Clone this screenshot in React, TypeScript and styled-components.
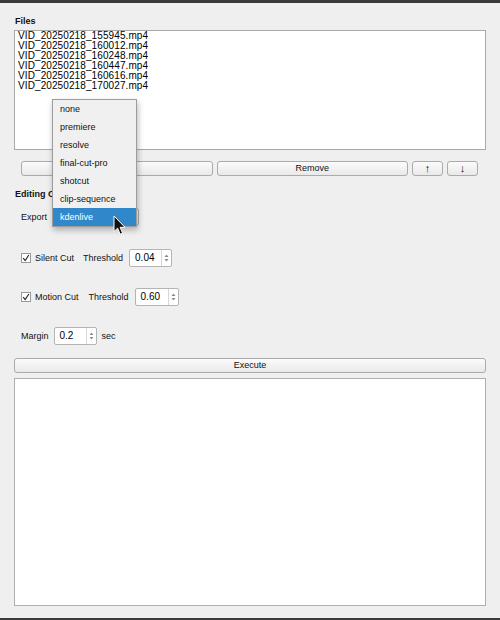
import React from "react";
import styled, { createGlobalStyle } from "styled-components";

const Global = createGlobalStyle`
  html, body { margin: 0; padding: 0; background: #efefef; }
  body { font-family: "Liberation Sans", Arial, sans-serif; font-size: 9px; color: #111; }
`;

const Window = styled.div`
  position: relative;
  width: 500px;
  height: 620px;
  display: flex;
  flex-direction: column;
  background: #efefef;
  overflow: hidden;
`;

const Frame = styled.div<{ $h: number }>`
  height: ${(p) => p.$h}px;
  background: #3b3b3b;
  flex: none;
`;

const Body = styled.div`
  flex: 1;
  display: flex;
  flex-direction: column;
  padding: 11px 14px 0 14px;
`;

const GroupTitle = styled.div<{ $mt?: number }>`
  height: 13px;
  line-height: 14px;
  font-weight: bold;
  padding-left: 1px;
  margin-top: ${(p) => p.$mt ?? 0}px;
`;

const FileList = styled.div`
  margin-top: 3px;
  height: 120px;
  box-sizing: border-box;
  border: 1px solid #a9a9a9;
  background: #fff;
  padding: 0 3px;
  font-size: 10px;
  line-height: 10px;
  letter-spacing: 0.1px;
  color: #000;
`;

const FileItem = styled.div`
  height: 10px;
  white-space: nowrap;
`;

const ButtonRow = styled.div`
  margin-top: 11px;
  padding: 0 8px 0 7px;
  display: flex;
  gap: 4px;
`;

const Button = styled.button<{ $w?: number; $grow?: boolean; $big?: boolean }>`
  height: 15px;
  padding: 0;
  margin: 0;
  box-sizing: border-box;
  border: 1px solid #ababab;
  border-radius: 3px;
  background: linear-gradient(#fbfbfb, #e9e9e9);
  font-family: "Liberation Sans", Arial, sans-serif;
  font-size: ${(p) => (p.$big ? 11 : 9)}px;
  line-height: 13px;
  color: #111;
  flex: ${(p) => (p.$grow ? "1 1 0" : "none")};
  width: ${(p) => (p.$w ? `${p.$w}px` : "auto")};
`;

const Row = styled.div<{ $mt: number }>`
  margin-top: ${(p) => p.$mt}px;
  height: 18px;
  display: flex;
  align-items: center;
  padding-left: 7px;
`;

const Label = styled.span<{ $ml?: number; $mr?: number }>`
  margin-left: ${(p) => p.$ml ?? 0}px;
  margin-right: ${(p) => p.$mr ?? 0}px;
  white-space: nowrap;
`;

const Check = styled.span`
  width: 10px;
  height: 10px;
  box-sizing: border-box;
  border: 1px solid #9a9a9a;
  background: #fff;
  display: inline-flex;
  align-items: center;
  justify-content: center;
  margin-right: 4px;
`;

const Spin = styled.div<{ $w: number }>`
  width: ${(p) => p.$w}px;
  height: 18px;
  box-sizing: border-box;
  border: 1px solid #b4b4b4;
  border-radius: 2px;
  background: #fff;
  display: flex;
`;

const SpinText = styled.div`
  flex: 1;
  padding-left: 5px;
  font-size: 10px;
  line-height: 16px;
  color: #000;
`;

const SpinArrows = styled.div`
  width: 9px;
  border-left: 1px solid #d6d6d6;
  display: flex;
  align-items: center;
  justify-content: center;
`;

const Combo = styled.div`
  width: 84px;
  height: 18px;
  box-sizing: border-box;
  border: 1px solid #ababab;
  border-radius: 3px;
  background: linear-gradient(#fbfbfb, #e9e9e9);
  margin-left: 8px;
`;

const Execute = styled(Button)`
  margin-top: 13px;
  width: 100%;
`;

const Output = styled.div`
  margin-top: 5px;
  height: 228px;
  box-sizing: border-box;
  border: 1px solid #b0b0b0;
  background: #fff;
`;

const Spacer = styled.div`
  flex: 1;
`;

const Popup = styled.div`
  position: absolute;
  left: 52px;
  top: 99px;
  width: 85px;
  box-sizing: border-box;
  border: 1px solid #9c9c9c;
  background: #f0f0f0;
  box-shadow: 1px 3px 6px rgba(0, 0, 0, 0.28);
`;

const PopupItem = styled.div<{ $active?: boolean }>`
  height: 18px;
  line-height: 18px;
  padding-left: 7px;
  font-size: 9px;
  background: ${(p) => (p.$active ? "#3087c9" : "transparent")};
  color: ${(p) => (p.$active ? "#fff" : "#111")};
`;

const Pointer = styled.svg`
  position: absolute;
  left: 113px;
  top: 215px;
`;

const files = [
  "VID_20250218_155945.mp4",
  "VID_20250218_160012.mp4",
  "VID_20250218_160248.mp4",
  "VID_20250218_160447.mp4",
  "VID_20250218_160616.mp4",
  "VID_20250218_170027.mp4",
];

const formats = ["none", "premiere", "resolve", "final-cut-pro", "shotcut", "clip-sequence", "kdenlive"];

const Tick = () => (
  <svg width="8" height="8" viewBox="0 0 8 8">
    <path d="M1.2 4.2 L3.2 6.6 L6.8 1" fill="none" stroke="#222" strokeWidth="1.1" />
  </svg>
);

const Arrows = () => (
  <svg width="5" height="10" viewBox="0 0 5 10">
    <path d="M0.5 4 L2.5 1.5 L4.5 4 Z" fill="#8a8a8a" />
    <path d="M0.5 6 L2.5 8.5 L4.5 6 Z" fill="#8a8a8a" />
  </svg>
);

const SpinBox = ({ value, width }: { value: string; width: number }) => (
  <Spin $w={width}>
    <SpinText>{value}</SpinText>
    <SpinArrows>
      <Arrows />
    </SpinArrows>
  </Spin>
);

export default function App() {
  return (
    <Window>
      <Global />
      <Frame $h={3} />
      <Body>
        <GroupTitle>Files</GroupTitle>
        <FileList>
          {files.map((f) => (
            <FileItem key={f}>{f}</FileItem>
          ))}
        </FileList>
        <ButtonRow>
          {/* add-files button; its caption sits under the open export menu */}
          <Button $grow aria-label="Add Files" />
          <Button $grow>Remove</Button>
          <Button $w={31} $big>↑</Button>
          <Button $w={31} $big>↓</Button>
        </ButtonRow>

        <GroupTitle $mt={11}>Editing Options</GroupTitle>
        <Row $mt={8}>
          <Label>Export</Label>
          <Combo />
        </Row>
        <Row $mt={23}>
          <Check>
            <Tick />
          </Check>
          <Label>Silent Cut</Label>
          <Label $ml={9} $mr={6}>Threshold</Label>
          <SpinBox value="0.04" width={43} />
        </Row>
        <Row $mt={21}>
          <Check>
            <Tick />
          </Check>
          <Label>Motion Cut</Label>
          <Label $ml={10} $mr={6}>Threshold</Label>
          <SpinBox value="0.60" width={44} />
        </Row>
        <Row $mt={21}>
          <Label $mr={5}>Margin</Label>
          <SpinBox value="0.2" width={43} />
          <Label $ml={5}>sec</Label>
        </Row>

        <Execute>Execute</Execute>
        <Output />
        <Spacer />
      </Body>
      <Frame $h={2} />

      <Popup>
        {formats.map((f) => (
          <PopupItem key={f} $active={f === "kdenlive"}>
            {f}
          </PopupItem>
        ))}
      </Popup>

      <Pointer width="14" height="22" viewBox="0 0 14 22">
        <path
          d="M1 1 L1 16.5 L4.6 13.2 L7.2 19.2 L9.6 18.1 L7.1 12.3 L12 12.3 Z"
          fill="#111"
          stroke="#fff"
          strokeWidth="1"
          strokeLinejoin="round"
        />
      </Pointer>
    </Window>
  );
}
